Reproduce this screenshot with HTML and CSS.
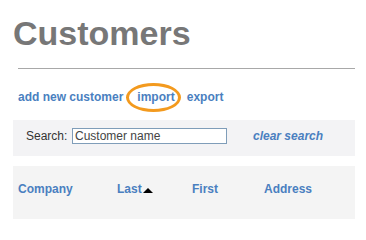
FILE: index.html
```html
<!DOCTYPE html>
<html>
<head>
<meta charset="utf-8">
<link rel="stylesheet" href="styles.css">
</head>
<body>
<div class="page">
  <h1 class="title">Customers</h1>
  <div class="rule"></div>
  <div class="actions">
    <a class="link">add new customer</a>
    <a class="link import">import<span class="ring"></span></a>
    <a class="link export">export</a>
  </div>
  <div class="search">
    <span class="search-label">Search:</span>
    <span class="search-input">Customer name</span>
    <a class="clear">clear search</a>
  </div>
  <div class="thead">
    <span class="th">Company</span>
    <span class="th">Last<span class="sort"></span></span>
    <span class="th">First</span>
    <span class="th">Address</span>
  </div>
</div>
</body>
</html>
```
FILE: styles.css
```css
html, body {
  margin: 0;
  padding: 0;
  background: #ffffff;
}
.page {
  width: 342px;
  padding: 14px 0 0 13px;
  font-family: "Liberation Sans", Arial, sans-serif;
}
.title {
  margin: 0;
  font-size: 34px;
  line-height: 39px;
  font-weight: bold;
  color: #777777;
}
.rule {
  margin: 15px 0 0 5px;
  border-top: 1px solid #a8a8a8;
}
.actions {
  margin-top: 21px;
  padding-left: 5px;
  display: flex;
  font-size: 12px;
  line-height: 14px;
  font-weight: bold;
}
.link {
  color: #4a7fc0;
  cursor: pointer;
}
.import {
  position: relative;
  margin-left: 14px;
}
.export {
  margin-left: 12px;
}
.ring {
  position: absolute;
  left: -11px;
  top: -7px;
  width: 49px;
  height: 23px;
  border: 3px solid #f39a1e;
  border-radius: 50%;
}
.search {
  margin-top: 16px;
  background: #f3f3f5;
  padding: 8px 0 12px 13px;
  display: flex;
  align-items: center;
  font-size: 12px;
}
.search-label {
  color: #333333;
  width: 46px;
}
.search-input {
  box-sizing: border-box;
  width: 155px;
  height: 16px;
  border: 1px solid #7f9db9;
  background: #ffffff;
  color: #444444;
  padding: 0 2px;
  line-height: 14px;
}
.clear {
  margin-left: 26px;
  color: #4a7fc0;
  font-weight: bold;
  font-style: italic;
}
.thead {
  margin-top: 10px;
  height: 53px;
  background: #f4f4f4;
  padding: 16px 0 0 5px;
  box-sizing: border-box;
  display: grid;
  grid-template-columns: 99px 75px 72px auto;
  align-items: start;
  font-size: 12px;
  line-height: 14px;
  font-weight: bold;
  color: #4a7fc0;
}
.th {
  display: flex;
  align-items: center;
}
.sort {
  display: inline-block;
  width: 0;
  height: 0;
  border-left: 5px solid transparent;
  border-right: 5px solid transparent;
  border-bottom: 5px solid #000000;
  margin-left: 1px;
  margin-top: 2px;
}
```
